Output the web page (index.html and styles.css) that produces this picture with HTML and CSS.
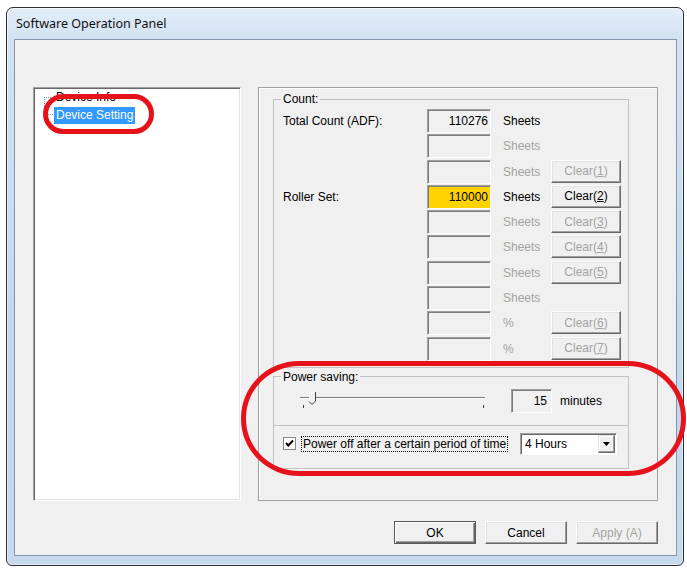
FILE: index.html
```html
<!DOCTYPE html>
<html>
<head>
    <title>Software Operation Panel</title>
    <link rel="stylesheet" href="styles.css">
</head>
<body>
    <div class="window">
        <div class="titlebar">Software Operation Panel</div>
        <div class="client">
            <div class="panes">
                <div class="tree">
                    <div class="tree-item">
                        <span class="branch first"></span>
                        <span class="node">Device Info</span>
                    </div>
                    <div class="tree-item">
                        <span class="branch last"></span>
                        <span class="node selected">Device Setting</span>
                    </div>
                </div>

                <div class="page">
                    <fieldset class="group count">
                        <legend>Count:</legend>
                        <div class="count-grid">
                            <span class="row-label">Total Count (ADF):</span>
                            <span class="field">110276</span>
                            <span class="unit on">Sheets</span>
                            <span></span>

                            <span></span>
                            <span class="field"></span>
                            <span class="unit">Sheets</span>
                            <span></span>

                            <span></span>
                            <span class="field"></span>
                            <span class="unit">Sheets</span>
                            <button class="btn" disabled>Clear(<u>1</u>)</button>

                            <span class="row-label">Roller Set:</span>
                            <span class="field warn">110000</span>
                            <span class="unit on">Sheets</span>
                            <button class="btn">Clear(<u>2</u>)</button>

                            <span></span>
                            <span class="field"></span>
                            <span class="unit">Sheets</span>
                            <button class="btn" disabled>Clear(<u>3</u>)</button>

                            <span></span>
                            <span class="field"></span>
                            <span class="unit">Sheets</span>
                            <button class="btn" disabled>Clear(<u>4</u>)</button>

                            <span></span>
                            <span class="field"></span>
                            <span class="unit">Sheets</span>
                            <button class="btn" disabled>Clear(<u>5</u>)</button>

                            <span></span>
                            <span class="field"></span>
                            <span class="unit">Sheets</span>
                            <span></span>

                            <span></span>
                            <span class="field"></span>
                            <span class="unit">%</span>
                            <button class="btn" disabled>Clear(<u>6</u>)</button>

                            <span></span>
                            <span class="field"></span>
                            <span class="unit">%</span>
                            <button class="btn" disabled>Clear(<u>7</u>)</button>
                        </div>
                    </fieldset>

                    <fieldset class="group power">
                        <legend>Power saving:</legend>
                        <div class="slider-row">
                            <svg class="slider" width="190" height="24" viewBox="0 0 190 24">
                                <line x1="2" y1="8.5" x2="187" y2="8.5" stroke="#7a7a7a" stroke-width="1"/>
                                <line x1="2" y1="9.5" x2="187" y2="9.5" stroke="#ffffff" stroke-width="1"/>
                                <line x1="5.5" y1="16" x2="5.5" y2="19" stroke="#404040" stroke-width="1"/>
                                <line x1="185.5" y1="16" x2="185.5" y2="19" stroke="#404040" stroke-width="1"/>
                                <polygon points="11,3 17,3 17,12 14,15 11,12" fill="#f0f0f0"/>
                                <polyline points="11.5,12 11.5,3.5 17,3.5" fill="none" stroke="#ffffff" stroke-width="1"/>
                                <polyline points="17.5,3 17.5,12 14,15.5 11,12.5" fill="none" stroke="#404040" stroke-width="1"/>
                            </svg>
                            <span class="field minutes-field">15</span>
                            <span class="minutes">minutes</span>
                        </div>
                        <div class="check-row">
                            <span class="checkbox">
                                <svg width="11" height="11" viewBox="0 0 11 11">
                                    <polyline points="2,5 4.3,7.5 9,2.5" fill="none" stroke="#000" stroke-width="2"/>
                                </svg>
                            </span>
                            <span class="check-label">Power off after a certain period of time</span>
                            <div class="combo">
                                <span class="combo-text">4 Hours</span>
                                <span class="combo-btn">
                                    <svg width="7" height="4" viewBox="0 0 7 4"><polygon points="0,0 7,0 3.5,4" fill="#000"/></svg>
                                </span>
                            </div>
                        </div>
                    </fieldset>
                </div>
            </div>

            <div class="actions">
                <button class="btn action default">OK</button>
                <button class="btn action">Cancel</button>
                <button class="btn action" disabled>Apply (A)</button>
            </div>
        </div>
    </div>

    <div class="mark mark-tree"></div>
    <div class="mark mark-power"></div>
</body>
</html>
```

FILE: styles.css
```css
body {
    margin: 0;
    width: 687px;
    height: 568px;
    position: relative;
    overflow: hidden;
    background-color: #ffffff;
    font-family: "Liberation Sans", Arial, sans-serif;
    font-size: 12px;
    color: #000;
}
.window {
    margin: 7px 0 0 6px;
    width: 678px;
    height: 559px;
    box-sizing: border-box;
    border: 1px solid #2e2e2e;
    border-radius: 7px 7px 6px 6px;
    padding: 0 6px 9px 7px;
    background: linear-gradient(to bottom, #e3edf8 0, #d2e2f3 30px, #c3d7ed 60%, #c6d9ee 100%);
    box-shadow: inset 0 0 0 1px rgba(255,255,255,0.5);
    display: flex;
    flex-direction: column;
}
.titlebar {
    height: 31px;
    line-height: 31px;
    padding-left: 2px;
    font-family: "Noto Sans", "Open Sans", sans-serif;
    font-size: 12.5px;
    color: #111;
}
.client {
    flex: 1;
    border: 1px solid #8497af;
    background-color: #f0f0f0;
    padding: 47px 18px 0 18px;
}
.panes {
    display: grid;
    grid-template-columns: 208px 400px;
    column-gap: 17px;
    height: 414px;
}
.tree {
    background-color: #fff;
    border: 1px solid;
    border-color: #a0a0a0 #ffffff #ffffff #a0a0a0;
    box-shadow: inset 1px 1px #696969, inset -1px -1px #e3e3e3;
}
.tree-item {
    display: flex;
    align-items: center;
    height: 18px;
    padding-left: 10px;
}
.branch {
    width: 9px;
    height: 9px;
    border-left: 1px dotted #9a9a9a;
    box-sizing: border-box;
}
.branch.first {
    align-self: flex-end;
    border-top: 1px dotted #9a9a9a;
}
.branch.last {
    align-self: flex-start;
    border-bottom: 1px dotted #9a9a9a;
}
.node {
    margin-left: 1px;
    padding: 0 2px;
    line-height: 17px;
}
.node.selected {
    background-color: #3399ff;
    color: #fff;
}
.page {
    border: 1px solid #a0a0a0;
    box-shadow: inset 1px 1px #ffffff;
}
.group {
    margin: 4px 28px 0 14px;
    border: 1px solid #c2c2c2;
    padding: 3px 7px 5px 9px;
    min-width: 0;
}
.group legend {
    padding: 0 2px;
    margin-left: -2px;
    line-height: 14px;
}
.count-grid {
    display: grid;
    grid-template-columns: 144px 64px 60px 70px;
    grid-auto-rows: 25.3px;
    align-items: start;
}
.row-label {
    line-height: 24px;
}
.field {
    height: 24px;
    box-sizing: border-box;
    border: 1px solid;
    border-color: #a0a0a0 #ffffff #ffffff #a0a0a0;
    box-shadow: inset 1px 1px #7c7c7c;
    background-color: #f0f0f0;
    text-align: right;
    padding-right: 2px;
    line-height: 22px;
}
.field.warn {
    background-color: #ffd200;
}
.unit {
    line-height: 24px;
    padding-left: 12px;
    color: #a3a3a3;
}
.unit.on {
    color: #000;
}
.btn {
    font-family: inherit;
    font-size: 12px;
    height: 23px;
    padding: 0;
    color: #000;
    background-color: #f0f0f0;
    border: 1px solid;
    border-color: #ffffff #696969 #696969 #ffffff;
    box-shadow: inset -1px -1px #a0a0a0, inset 1px 1px #e3e3e3;
}
.btn:disabled {
    color: #a3a3a3;
}
.power {
    margin-top: 2px;
    padding: 0;
}
.power legend {
    margin-left: 7px;
}
.slider-row {
    display: flex;
    align-items: center;
    padding: 5px 0 12px 24px;
}
.slider {
    display: block;
}
.minutes-field {
    width: 41px;
    margin-left: 23px;
    padding-right: 4px;
}
.minutes {
    margin-left: 8px;
}
.check-row {
    display: flex;
    align-items: center;
    border-top: 1px solid #c2c2c2;
    padding: 7px 11px 13px 9px;
}
.checkbox {
    width: 13px;
    height: 13px;
    box-sizing: border-box;
    border: 1px solid #8a8a8a;
    background-color: #fff;
    display: flex;
    align-items: center;
    justify-content: center;
}
.check-label {
    margin-left: 5px;
    border: 1px dotted #000;
    padding: 0 1px;
    line-height: 14px;
}
.combo {
    margin-left: auto;
    width: 97px;
    height: 22px;
    box-sizing: border-box;
    border: 1px solid;
    border-color: #a0a0a0 #ffffff #ffffff #a0a0a0;
    box-shadow: inset 1px 1px #696969;
    background-color: #fff;
    display: flex;
    align-items: center;
    padding: 1px 1px 1px 4px;
}
.combo-text {
    flex: 1;
}
.combo-btn {
    width: 17px;
    height: 18px;
    box-sizing: border-box;
    background-color: #f0f0f0;
    border: 1px solid;
    border-color: #e3e3e3 #696969 #696969 #e3e3e3;
    box-shadow: inset -1px -1px #a0a0a0, inset 1px 1px #ffffff;
    display: flex;
    align-items: center;
    justify-content: center;
}
.actions {
    display: flex;
    justify-content: flex-end;
    gap: 9px;
    margin-top: 20px;
}
.btn.action {
    width: 82px;
}
.btn.default {
    border-color: #5a5a5a;
    box-shadow: inset 1px 1px #ffffff, inset -1px -1px #696969, inset -2px -2px #a0a0a0;
}
.mark {
    position: absolute;
    box-sizing: border-box;
    border: 5px solid #e5121b;
}
.mark-tree {
    left: 43px;
    top: 94px;
    width: 111px;
    height: 40px;
    border-radius: 20px;
}
.mark-power {
    left: 241px;
    top: 361px;
    width: 445px;
    height: 115px;
    border-radius: 58px / 57px;
}
```
